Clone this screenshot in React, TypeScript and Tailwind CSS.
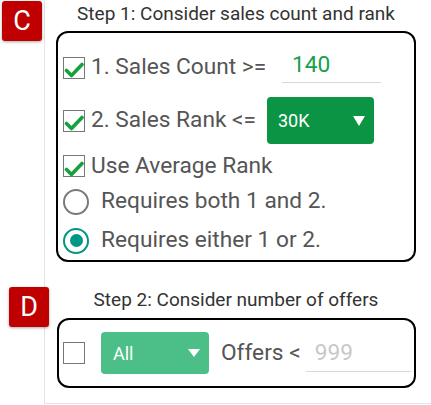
import React, { useState } from "react";

const Check = ({ checked }: { checked: boolean }) => (
  <div className="relative w-[22px] h-[22px] shrink-0 border-[1.5px] border-[#777] bg-white">
    {checked && (
      <svg viewBox="0 0 22 22" className="absolute left-[-1.5px] top-[-1.5px] w-[22px] h-[22px]">
        <path d="M3.5 14.5 L8.5 19.5 L19 8.5" fill="none" stroke="#16a03e" strokeWidth="3.6" strokeLinecap="round" strokeLinejoin="round" />
      </svg>
    )}
  </div>
);

const Radio = ({ on }: { on: boolean }) =>
  on ? (
    <div className="w-[26px] h-[26px] shrink-0 rounded-full border-[2.5px] border-[#009688] flex items-center justify-center">
      <div className="w-[13px] h-[13px] rounded-full bg-[#009688]" />
    </div>
  ) : (
    <div className="w-[26px] h-[26px] shrink-0 rounded-full border-[2.5px] border-[#7a7a7a]" />
  );

const Caret = () => (
  <svg viewBox="0 0 12 10" className="w-[12px] h-[10px]">
    <polygon points="0,0 12,0 6,10" fill="#fff" />
  </svg>
);

export default function App() {
  const [count, setCount] = useState("140");
  const [offers, setOffers] = useState("");

  return (
    <div className="relative w-[431px] h-[405px] bg-white font-['Roboto',sans-serif] overflow-hidden">
      <div className="ml-[44px] h-[404px] border-l border-b border-[#e4e4e4] pl-[11px] pr-[15px]">
        <div className="h-[31px] text-center text-[19px] leading-[28px] text-[#333]">
          Step 1: Consider sales count and rank
        </div>

        <div className="h-[231px] rounded-[12px] border-2 border-black pl-[5px] pt-[12px] text-[22.7px] text-[#555]">
          <div className="h-[45px] flex items-center">
            <Check checked />
            <span className="ml-[6px] w-[191px]">1. Sales Count &gt;=</span>
            <input
              value={count}
              onChange={(e) => setCount(e.target.value)}
              className="w-[99px] h-[37px] mb-[6px] pl-[10px] border-b border-[#d8d8d8] text-[#17a04a] outline-none bg-transparent"
            />
          </div>

          <div className="mt-[7px] h-[47px] flex items-center">
            <Check checked />
            <span className="ml-[6px] w-[176px]">2. Sales Rank &lt;=</span>
            <button className="w-[107px] h-[47px] rounded-[4px] bg-[#0a9444] text-white text-[18px] flex items-center justify-between pl-[11px] pr-[9px]">
              <span>30K</span>
              <Caret />
            </button>
          </div>

          <div className="h-[44px] flex items-center">
            <Check checked />
            <span className="ml-[6px]">Use Average Rank</span>
          </div>

          <div className="h-[27px] flex items-center">
            <Radio on={false} />
            <span className="ml-[12px]">Requires both 1 and 2.</span>
          </div>

          <div className="mt-[12px] h-[27px] flex items-center">
            <Radio on />
            <span className="ml-[12px]">Requires either 1 or 2.</span>
          </div>
        </div>

        <div className="h-[56px] flex items-end justify-center pb-[6px] text-[19px] leading-[24px] text-[#333]">
          Step 2: Consider number of offers
        </div>

        <div className="h-[70px] ml-[1px] rounded-[12px] border-2 border-black pl-[4px] flex items-center text-[22.7px] text-[#555]">
          <Check checked={false} />
          <button className="ml-[16px] w-[108px] h-[42px] rounded-[4px] bg-[#4cbf88] text-white text-[18px] flex items-center justify-between pl-[12px] pr-[9px]">
            <span>All</span>
            <svg viewBox="0 0 12 8" className="w-[12px] h-[8px]">
              <polygon points="0,0 12,0 6,8" fill="#fff" />
            </svg>
          </button>
          <span className="ml-[12px]">Offers &lt;</span>
          <input
            value={offers}
            placeholder="999"
            onChange={(e) => setOffers(e.target.value)}
            className="ml-[5px] w-[105px] h-[37px] pl-[9px] border-b border-[#d8d8d8] text-[#555] placeholder:text-[#c8c8c8] outline-none bg-transparent"
          />
        </div>
      </div>

      <div className="absolute left-[2px] top-[1px] w-[40px] h-[40px] rounded-[3px] bg-[#c00000] shadow-[0_1px_3px_rgba(0,0,0,0.35)] flex items-center justify-center text-white text-[27px] leading-none">
        C
      </div>
      <div className="absolute left-[9px] top-[287px] w-[40px] h-[40px] rounded-[3px] bg-[#c00000] shadow-[0_1px_3px_rgba(0,0,0,0.35)] flex items-center justify-center text-white text-[27px] leading-none">
        D
      </div>
    </div>
  );
}
